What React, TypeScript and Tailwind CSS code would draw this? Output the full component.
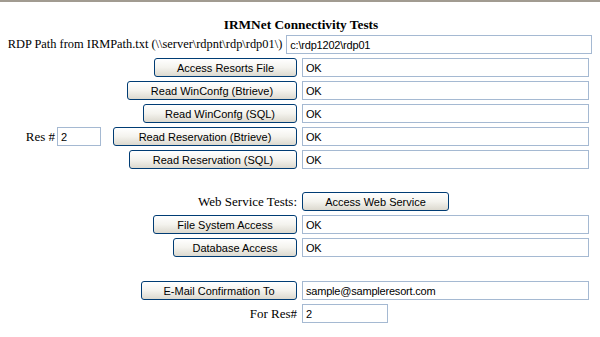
const serif = "font-['Liberation_Serif','Times_New_Roman',serif]";
const sans = "font-['Liberation_Sans',Arial,sans-serif]";

function Btn({ label, w }: { label: string; w: string }) {
  return (
    <button
      className={`${w} ${sans} h-[19px] shrink-0 rounded-[3px] border border-[#003c74] bg-gradient-to-b from-white via-[#f4f3ee] to-[#dcd9cf] pt-[1px] text-[11px] leading-none text-black`}
    >
      {label}
    </button>
  );
}

function Field({ value, w }: { value: string; w: string }) {
  return (
    <input
      readOnly
      value={value}
      className={`${w} ${sans} h-[19px] shrink-0 border border-[#a5b9d2] bg-white px-[3px] text-[11px] tracking-[-0.2px] text-black outline-none`}
    />
  );
}

function Row({ left, right }: { left: React.ReactNode; right?: React.ReactNode }) {
  return (
    <div className="flex h-[23px] items-center">
      <div className="flex w-[297px] items-center justify-end whitespace-nowrap">{left}</div>
      <div className="ml-[5px] flex items-center">{right}</div>
    </div>
  );
}

export default function App() {
  return (
    <div className={`h-[337px] w-[600px] overflow-hidden bg-white ${serif} text-[13px] text-black`}>
      <div className="h-[2px] bg-[#a19b91]" />
      <h1 className="mt-[15px] h-[16px] pl-[2px] text-center text-[13.3px] font-bold leading-[16px]">
        IRMNet Connectivity Tests
      </h1>

      <div className="flex h-[23px] items-center justify-center whitespace-nowrap">
        <span className="mr-[4px] shrink-0 text-[12.4px]">RDP Path from IRMPath.txt (\\server\rdpnt\rdp\rdp01\)</span>
        <Field value="c:\rdp1202\rdp01" w="w-[306px]" />
      </div>

      <Row left={<Btn label="Access Resorts File" w="w-[143px]" />} right={<Field value="OK" w="w-[287px]" />} />
      <Row left={<Btn label="Read WinConfg (Btrieve)" w="w-[170px]" />} right={<Field value="OK" w="w-[287px]" />} />
      <Row left={<Btn label="Read WinConfg (SQL)" w="w-[154px]" />} right={<Field value="OK" w="w-[287px]" />} />
      <Row
        left={
          <>
            <span className="mr-[2px]">Res #</span>
            <Field value="2" w="w-[44px]" />
            <div className="w-[12px]" />
            <Btn label="Read Reservation (Btrieve)" w="w-[184px]" />
          </>
        }
        right={<Field value="OK" w="w-[287px]" />}
      />
      <Row left={<Btn label="Read Reservation (SQL)" w="w-[168px]" />} right={<Field value="OK" w="w-[287px]" />} />

      <div className="h-[19px]" />

      <Row left={<span>Web Service Tests:</span>} right={<Btn label="Access Web Service" w="w-[147px]" />} />
      <Row left={<Btn label="File System Access" w="w-[144px]" />} right={<Field value="OK" w="w-[287px]" />} />
      <Row left={<Btn label="Database Access" w="w-[124px]" />} right={<Field value="OK" w="w-[287px]" />} />

      <div className="h-[20px]" />

      <Row
        left={<Btn label="E-Mail Confirmation To" w="w-[156px]" />}
        right={<Field value="sample@sampleresort.com" w="w-[287px]" />}
      />
      <Row left={<span>For Res#</span>} right={<Field value="2" w="w-[86px]" />} />
    </div>
  );
}
